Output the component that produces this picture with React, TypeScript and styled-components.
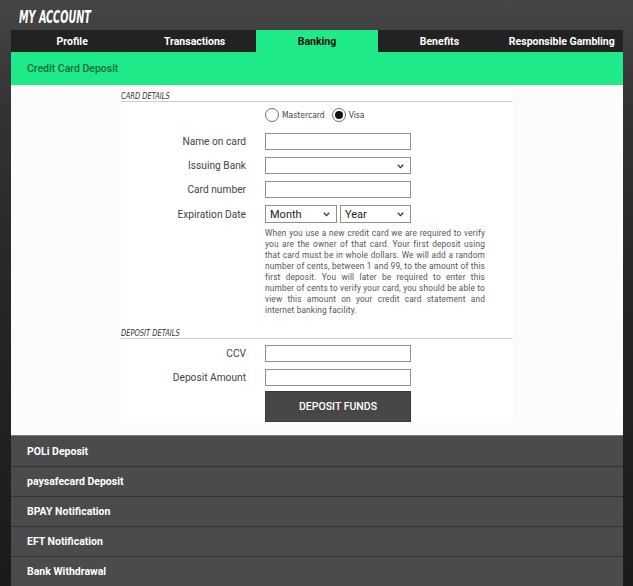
import React from "react";
import styled, { createGlobalStyle } from "styled-components";

const Global = createGlobalStyle`
  html, body { margin: 0; padding: 0; }
  body {
    width: 633px;
    min-height: 586px;
    background: linear-gradient(to bottom, #464646 0px, #333 110px, #262626 300px, #1b1b1b 586px);
    font-family: Roboto, "Liberation Sans", sans-serif;
    overflow: hidden;
  }
`;

const Page = styled.div`
  padding: 0 10px 0 11px;
  display: flex;
  flex-direction: column;
`;

const TitleBar = styled.div`
  height: 30px;
  box-sizing: border-box;
  padding: 7px 0 0 8px;
`;

const Title = styled.h1`
  margin: 0;
  display: inline-block;
  font-family: "DejaVu Sans Condensed", "Liberation Sans", sans-serif;
  font-style: italic;
  font-weight: 700;
  font-size: 17px;
  line-height: 20px;
  color: #fff;
  transform: scaleX(0.63);
  transform-origin: left center;
`;

const Tabs = styled.nav`
  display: grid;
  grid-template-columns: repeat(5, 1fr);
  height: 22px;
  background: #222;
`;

const Tab = styled.div<{ $active?: boolean }>`
  display: flex;
  align-items: center;
  justify-content: center;
  font-size: 10.5px;
  font-weight: 700;
  color: ${(p) => (p.$active ? "#111" : "#fff")};
  background: ${(p) => (p.$active ? "#1fea89" : "transparent")};
`;

const GreenHeader = styled.div`
  height: 33px;
  background: #1fea89;
  display: flex;
  align-items: center;
  padding-left: 16px;
  font-size: 10.5px;
  font-weight: 500;
  color: #0c6a3c;
`;

const Panel = styled.section`
  background: #fcfcfc;
  padding: 4px 0 13px;
  border-bottom: 1px solid #777;
`;

const FormBox = styled.div`
  width: 392px;
  margin: 0 auto;
  background: #fff;
  display: flex;
  flex-direction: column;
`;

const SectionHead = styled.div<{ $top?: number }>`
  line-height: 10px;
  border-bottom: 1px solid #cfcfcf;
  margin-top: ${(p) => p.$top ?? 0}px;
`;

const SectionText = styled.span`
  display: inline-block;
  font-family: "DejaVu Sans Condensed", "Liberation Sans", sans-serif;
  font-style: italic;
  font-size: 8.5px;
  color: #333;
  transform: scaleX(0.88);
  transform-origin: left center;
`;

const Grid = styled.div<{ $top?: number }>`
  display: grid;
  grid-template-columns: 125px 146px;
  column-gap: 19px;
  row-gap: 7px;
  align-items: center;
  margin-top: ${(p) => p.$top ?? 0}px;
`;

const Label = styled.label`
  text-align: right;
  font-size: 10.2px;
  color: #444;
`;

const RadioRow = styled.div`
  grid-column: 2 / span 1;
  display: flex;
  align-items: center;
  gap: 3px;
  white-space: nowrap;
  margin-bottom: 4px;
`;

const RadioCircle = styled.span<{ $checked?: boolean }>`
  width: 14px;
  height: 14px;
  box-sizing: border-box;
  border-radius: 50%;
  border: 1px solid #6d6d6d;
  display: flex;
  align-items: center;
  justify-content: center;
  &::after {
    content: "";
    width: 8px;
    height: 8px;
    border-radius: 50%;
    background: ${(p) => (p.$checked ? "#111" : "transparent")};
  }
`;

const RadioText = styled.span<{ $gap?: number }>`
  font-family: "DejaVu Sans Condensed", "Liberation Sans", sans-serif;
  font-size: 8.5px;
  color: #444;
  margin-right: ${(p) => p.$gap ?? 0}px;
`;

const Input = styled.input`
  box-sizing: border-box;
  width: 146px;
  height: 17px;
  border: 1px solid #8f8f8f;
  margin: 0;
  padding: 0 4px;
  background: #fff;
`;

const SelectWrap = styled.div<{ $w?: number }>`
  position: relative;
  width: ${(p) => p.$w ?? 146}px;
  height: ${(p) => (p.$w ? 18 : 17)}px;
  box-sizing: border-box;
  border: 1px solid #8f8f8f;
  background: #fff;
  display: flex;
  align-items: center;
  padding-left: 4px;
  font-size: 11px;
  color: #222;
`;

const Chevron = styled.svg`
  position: absolute;
  right: 6px;
  top: 50%;
  margin-top: -2px;
`;

const DateRow = styled.div`
  display: flex;
  gap: 3px;
`;

const Note = styled.p`
  grid-column: 2 / span 1;
  width: 220px;
  margin: -2px 0 0;
  font-size: 8.3px;
  letter-spacing: 0.15px;
  line-height: 11px;
  color: #555;
  text-align: justify;
`;

const Button = styled.button`
  box-sizing: border-box;
  width: 146px;
  height: 31px;
  margin-top: -2px;
  border: 1px solid #3a3a3a;
  background: #474747;
  color: #fff;
  font-family: Roboto, "Liberation Sans", sans-serif;
  font-size: 10.5px;
  font-weight: 500;
  text-transform: uppercase;
`;

const Accordion = styled.div`
  display: flex;
  flex-direction: column;
`;

const AccRow = styled.div`
  height: 30px;
  box-sizing: border-box;
  background: #4b4b4b;
  border-top: 1px solid #333;
  display: flex;
  align-items: center;
  padding-left: 16px;
  font-size: 10.5px;
  font-weight: 700;
  color: #fff;
  &:first-child { border-top: none; }
`;

const Arrow = () => (
  <Chevron width="7" height="5" viewBox="0 0 7 5">
    <polyline points="0.8,0.8 3.5,3.6 6.2,0.8" fill="none" stroke="#333" strokeWidth="1.3" />
  </Chevron>
);

const tabs = ["Profile", "Transactions", "Banking", "Benefits", "Responsible Gambling"];
const rows = ["POLi Deposit", "paysafecard Deposit", "BPAY Notification", "EFT Notification", "Bank Withdrawal"];

export default function App() {
  return (
    <>
      <Global />
      <Page>
        <TitleBar>
          <Title>MY ACCOUNT</Title>
        </TitleBar>
        <Tabs>
          {tabs.map((t) => (
            <Tab key={t} $active={t === "Banking"}>{t}</Tab>
          ))}
        </Tabs>
        <GreenHeader>Credit Card Deposit</GreenHeader>
        <Panel>
          <FormBox>
            <SectionHead><SectionText>CARD DETAILS</SectionText></SectionHead>
            <Grid $top={6}>
              <RadioRow>
                <RadioCircle />
                <RadioText $gap={4}>Mastercard</RadioText>
                <RadioCircle $checked />
                <RadioText>Visa</RadioText>
              </RadioRow>
              <Label>Name on card</Label>
              <Input />
              <Label>Issuing Bank</Label>
              <SelectWrap><Arrow /></SelectWrap>
              <Label>Card number</Label>
              <Input />
              <Label>Expiration Date</Label>
              <DateRow>
                <SelectWrap $w={72}>Month<Arrow /></SelectWrap>
                <SelectWrap $w={71}>Year<Arrow /></SelectWrap>
              </DateRow>
              <Note>
                When you use a new credit card we are required to verify you are the owner of that card. Your first deposit using that card must be in whole dollars. We will add a random number of cents, between 1 and 99, to the amount of this first deposit. You will later be required to enter this number of cents to verify your card, you should be able to view this amount on your credit card statement and internet banking facility.
              </Note>
            </Grid>
            <SectionHead $top={10}><SectionText>DEPOSIT DETAILS</SectionText></SectionHead>
            <Grid $top={6}>
              <Label>CCV</Label>
              <Input />
              <Label>Deposit Amount</Label>
              <Input />
              <span />
              <Button>Deposit Funds</Button>
            </Grid>
          </FormBox>
        </Panel>
        <Accordion>
          {rows.map((r) => (
            <AccRow key={r}>{r}</AccRow>
          ))}
        </Accordion>
      </Page>
    </>
  );
}
